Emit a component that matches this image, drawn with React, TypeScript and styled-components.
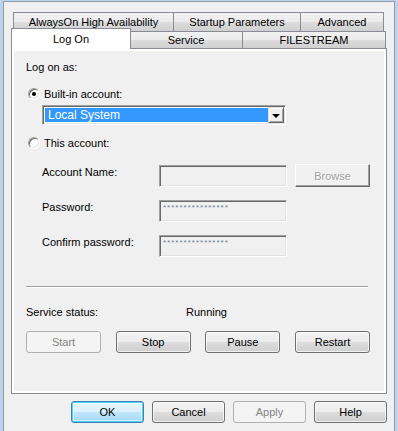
import styled, { createGlobalStyle } from 'styled-components'

const GlobalStyle = createGlobalStyle`
    html, body {
        margin: 0;
        padding: 0;
    }
    body {
        background: #bcd3ec;
        font-family: "Liberation Sans", Arial, sans-serif;
        font-size: 11px;
        color: #000;
    }
`

const Frame = styled.div`
    width: 398px;
    height: 431px;
    box-sizing: border-box;
    padding: 1px 3px 0 3px;
    background: #bcd3ec;
    overflow: hidden;
`

const Dialog = styled.div`
    height: 100%;
    box-sizing: border-box;
    border: 1px solid #8e9aa8;
    border-bottom: none;
    background: #f0f0f0;
    padding: 10px 7px 0 7px;
    display: flex;
    flex-direction: column;
`

const TabStrip = styled.div`
    display: flex;
    flex-direction: column;
    padding-left: 2px;
`

interface IRowProps {
    $height: number;
}

const TabRow = styled.div<IRowProps>`
    display: flex;
    height: ${props => props.$height}px;
`

interface ITabProps {
    $width: number;
    $height: number;
}

const Tab = styled.div<ITabProps>`
    width: ${props => props.$width}px;
    height: ${props => props.$height}px;
    flex: none;
    box-sizing: border-box;
    margin-right: -1px;
    border: 1px solid #898c95;
    border-bottom: none;
    background: linear-gradient(#f2f2f2 0%, #ebebeb 50%, #dddddd 51%, #cfcfcf 100%);
    display: flex;
    align-items: center;
    justify-content: center;
    padding-bottom: 1px;
    white-space: nowrap;
`

const SelectedTab = styled.div<ITabProps>`
    position: relative;
    z-index: 1;
    width: ${props => props.$width}px;
    height: ${props => props.$height}px;
    flex: none;
    box-sizing: border-box;
    margin: -3px -2px 0 -2px;
    border: 1px solid #898c95;
    border-bottom: none;
    background: #ffffff;
    display: flex;
    align-items: center;
    justify-content: center;
    padding-bottom: 1px;
`

const Panel = styled.div`
    width: 376px;
    height: 346px;
    box-sizing: border-box;
    border: 1px solid #898c95;
    background: #ffffff;
    padding: 2px;
`

const Page = styled.div`
    height: 100%;
    box-sizing: border-box;
    background: #f0f0f0;
    padding: 9px 14px 0 12px;
    display: flex;
    flex-direction: column;
`

const Line = styled.div`
    line-height: 15px;
    height: 15px;
`

const RadioRow = styled.label<{ $top: number }>`
    display: flex;
    align-items: center;
    gap: 4px;
    height: 15px;
    margin-top: ${props => props.$top}px;
    padding-left: 2px;
`

const Radio = styled.span<{ $checked?: boolean }>`
    width: 12px;
    height: 12px;
    box-sizing: border-box;
    border-radius: 50%;
    border: 1px solid;
    border-color: #a0a0a0 #ffffff #ffffff #a0a0a0;
    background: #ffffff;
    box-shadow: inset 1px 1px 0 #696969, inset -1px -1px 0 #e3e3e3;
    display: flex;
    align-items: center;
    justify-content: center;

    &::after {
        content: '';
        display: ${props => props.$checked ? 'block' : 'none'};
        width: 4px;
        height: 4px;
        border-radius: 50%;
        background: #000;
    }
`

const Combo = styled.div`
    margin: 4px 0 0 16px;
    width: 244px;
    height: 20px;
    box-sizing: border-box;
    border: 1px solid;
    border-color: #a0a0a0 #ffffff #ffffff #a0a0a0;
    box-shadow: inset 1px 1px 0 #696969, inset -1px -1px 0 #e3e3e3;
    background: #ffffff;
    padding: 2px;
    display: flex;
`

const ComboValue = styled.div`
    flex: 1;
    background: #3399ff;
    color: #ffffff;
    line-height: 14px;
    padding-left: 3px;
    font-size: 12px;
`

const ComboArrow = styled.div`
    width: 16px;
    box-sizing: border-box;
    margin: -1px -1px -1px 0;
    border: 1px solid;
    border-color: #e3e3e3 #696969 #696969 #e3e3e3;
    box-shadow: inset 1px 1px 0 #ffffff, inset -1px -1px 0 #a0a0a0;
    background: #f0f0f0;
    display: flex;
    align-items: center;
    justify-content: center;

    &::after {
        content: '';
        border-left: 4px solid transparent;
        border-right: 4px solid transparent;
        border-top: 4px solid #000;
        margin-top: 1px;
    }
`

const AccountGrid = styled.div`
    margin: 15px 0 0 16px;
    display: grid;
    grid-template-columns: 109px 128px 75px;
    column-gap: 8px;
    row-gap: 13px;
    grid-auto-rows: 22px;
`

const FieldLabel = styled.div`
    line-height: 15px;
`

const TextBox = styled.div`
    box-sizing: border-box;
    border: 1px solid;
    border-color: #a0a0a0 #ffffff #ffffff #a0a0a0;
    box-shadow: inset 1px 1px 0 #696969, inset -1px -1px 0 #e3e3e3;
    background: #f0f0f0;
    padding: 3px 0 0 3px;
`

const Mask = styled.span`
    font-size: 8px;
    line-height: 8px;
    letter-spacing: 1px;
    color: #6a7f9c;
    display: block;
`

const ClassicButton = styled.div`
    box-sizing: border-box;
    border: 1px solid;
    border-color: #ffffff #696969 #696969 #ffffff;
    box-shadow: inset -1px -1px 0 #a0a0a0;
    background: #f0f0f0;
    color: #a0a0a0;
    text-shadow: 1px 1px 0 #ffffff;
    display: flex;
    align-items: center;
    justify-content: center;
    margin-top: -1px;
    height: 23px;
`

const Separator = styled.div`
    margin: 29px 2px 0 0;
    height: 1px;
    background: #a0a0a0;
    border-bottom: 1px solid #ffffff;
`

const StatusRow = styled.div`
    margin-top: 17px;
    display: grid;
    grid-template-columns: 160px 1fr;
    line-height: 15px;
`

const ButtonRow = styled.div`
    margin-top: 11px;
    display: flex;
    justify-content: space-between;
`

const DialogButtons = styled.div`
    margin-top: 7px;
    display: flex;
    justify-content: flex-end;
    gap: 8px;
`

interface IButtonProps {
    $width: number;
    $disabled?: boolean;
    $default?: boolean;
}

const Button = styled.div<IButtonProps>`
    width: ${props => props.$width}px;
    height: 22px;
    box-sizing: border-box;
    border-radius: 3px;
    border: 1px solid ${props =>
        props.$disabled ? '#adb2b5'
        : props.$default ? '#3c7fb1'
        : '#707070'};
    background: ${props =>
        props.$disabled ? '#f4f4f4'
        : props.$default ? 'linear-gradient(#eaf6fd 0%, #d9f0fc 50%, #bee6fd 51%, #a7d9f5 100%)'
        : 'linear-gradient(#f2f2f2 0%, #ebebeb 50%, #dddddd 51%, #cfcfcf 100%)'};
    box-shadow: ${props =>
        props.$default ? 'inset 0 0 0 1px #48d8fb, inset 0 0 0 2px rgba(255,255,255,0.5)'
        : props.$disabled ? 'none'
        : 'inset 0 0 0 1px rgba(255,255,255,0.7)'};
    color: ${props => props.$disabled ? '#838383' : '#000'};
    display: flex;
    align-items: center;
    justify-content: center;
    font-size: 11px;
`

function App() {
    return (
        <Frame>
            <GlobalStyle />
            <Dialog>
                <TabStrip>
                    <TabRow $height={19}>
                        <Tab $width={161} $height={19}>AlwaysOn High Availability</Tab>
                        <Tab $width={128} $height={19}>Startup Parameters</Tab>
                        <Tab $width={84} $height={19}>Advanced</Tab>
                    </TabRow>
                    <TabRow $height={17}>
                        <SelectedTab $width={120} $height={21}>Log On</SelectedTab>
                        <Tab $width={114} $height={17}>Service</Tab>
                        <Tab $width={144} $height={17}>FILESTREAM</Tab>
                    </TabRow>
                </TabStrip>
                <Panel>
                    <Page>
                        <Line>Log on as:</Line>
                        <RadioRow $top={11}>
                            <Radio $checked />
                            Built-in account:
                        </RadioRow>
                        <Combo>
                            <ComboValue>Local System</ComboValue>
                            <ComboArrow />
                        </Combo>
                        <RadioRow $top={10}>
                            <Radio />
                            This account:
                        </RadioRow>
                        <AccountGrid>
                            <FieldLabel>Account Name:</FieldLabel>
                            <TextBox />
                            <ClassicButton>Browse</ClassicButton>
                            <FieldLabel>Password:</FieldLabel>
                            <TextBox><Mask>****************</Mask></TextBox>
                            <div />
                            <FieldLabel>Confirm password:</FieldLabel>
                            <TextBox><Mask>****************</Mask></TextBox>
                            <div />
                        </AccountGrid>
                        <Separator />
                        <StatusRow>
                            <span>Service status:</span>
                            <span>Running</span>
                        </StatusRow>
                        <ButtonRow>
                            <Button $width={75} $disabled>Start</Button>
                            <Button $width={75}>Stop</Button>
                            <Button $width={75}>Pause</Button>
                            <Button $width={75}>Restart</Button>
                        </ButtonRow>
                    </Page>
                </Panel>
                <DialogButtons>
                    <Button $width={73} $default>OK</Button>
                    <Button $width={73}>Cancel</Button>
                    <Button $width={73} $disabled>Apply</Button>
                    <Button $width={73}>Help</Button>
                </DialogButtons>
            </Dialog>
        </Frame>
    );
}

export default App;
